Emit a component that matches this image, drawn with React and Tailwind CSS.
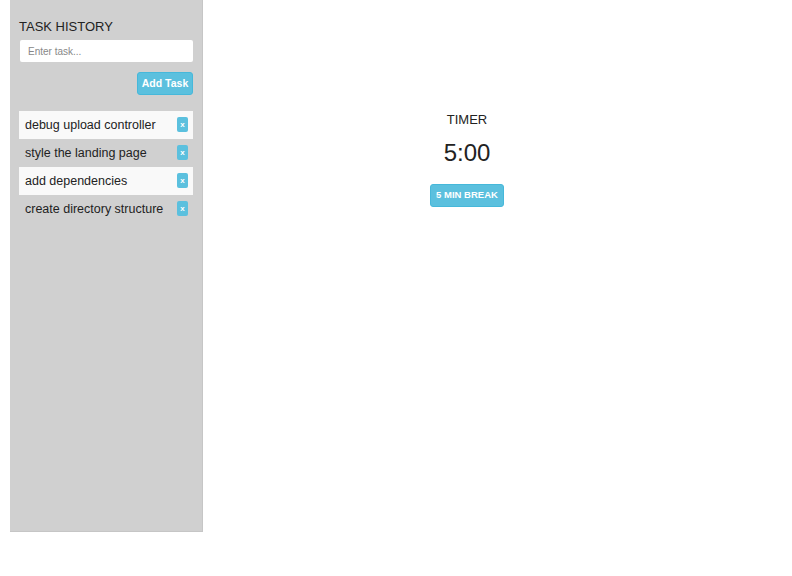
import React, { useState } from 'react';

const App = () => {
    const [tasks, setTasks] = useState([
        'debug upload controller',
        'style the landing page',
        'add dependencies',
        'create directory structure',
    ]);
    const [task, setTask] = useState('');

    const addTask = () => {
        if (!task.trim()) return;
        setTasks([task, ...tasks]);
        setTask('');
    };

    return (
        <div className="flex h-[576px] bg-white text-[#222]" style={{ fontFamily: '"Liberation Sans", Arial, sans-serif' }}>
            <div className="ml-[10px] w-[193px] h-[532px] bg-[#d0d0d0] border-r border-b border-[#c6c6c6] pl-[10px] pr-[9px] pt-[19px]">
                <h1 className="text-[13px] leading-[15px] ml-[-1px]">TASK HISTORY</h1>
                <input
                    className="mt-[6px] w-full h-[22px] bg-white rounded-[2px] px-[8px] text-[10px] text-[#555] placeholder:text-[#888] outline-none"
                    placeholder="Enter task..."
                    value={task}
                    onChange={(e) => setTask(e.target.value)}
                />
                <div className="flex justify-end mt-[10px]">
                    <button
                        className="w-[56px] h-[23px] bg-[#5bc0de] border border-[#46b8da] rounded-[3px] text-white text-[10.5px] font-bold"
                        onClick={addTask}>
                        Add Task
                    </button>
                </div>
                <ul className="mt-[16px] -ml-[1px]">
                    {tasks.map((t, i) => (
                        <li key={i} className={'flex items-center justify-between h-[28px] pl-[6px] pr-[5px] ' + (i % 2 === 0 ? 'bg-[#f9f9f9]' : '')}>
                            <span className="text-[12.5px]">{t}</span>
                            <button
                                className="w-[11px] h-[15px] bg-[#5bc0de] rounded-[2px] text-white text-[8px] font-bold leading-[15px] mb-[1px]"
                                onClick={() => setTasks(tasks.filter((_, j) => j !== i))}>
                                x
                            </button>
                        </li>
                    ))}
                </ul>
            </div>
            <div className="w-[528px] flex flex-col items-center pt-[112px]">
                <h2 className="text-[13px] leading-[15px]">TIMER</h2>
                <div className="text-[24px] leading-[28px] mt-[12px]">5:00</div>
                <button className="mt-[17px] w-[74px] h-[23px] bg-[#5bc0de] border border-[#46b8da] rounded-[3px] text-white text-[9.5px] font-bold">
                    5 MIN BREAK
                </button>
            </div>
        </div>
    );
};

export default App;
